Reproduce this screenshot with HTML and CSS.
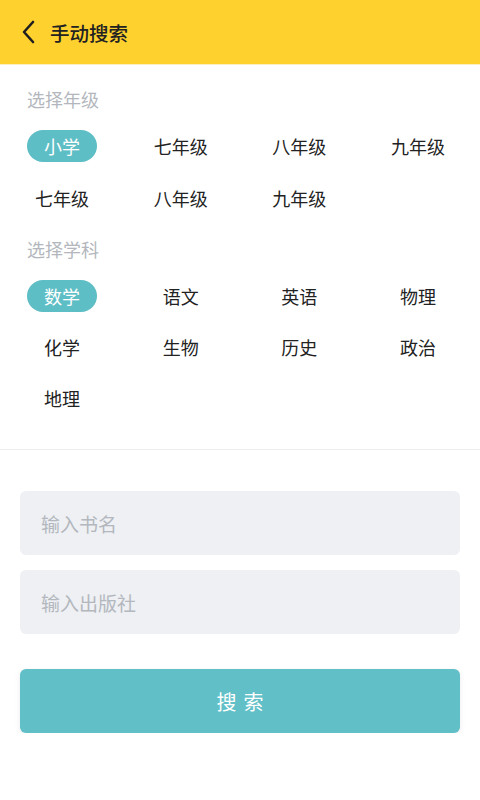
FILE: index.html
```html
<!DOCTYPE html>
<html lang="zh-CN">
<head>
    <meta charset="UTF-8">
    <meta name="viewport" content="width=device-width, initial-scale=1.0">
    <title>手动搜索</title>
    <link rel="stylesheet" href="styles.css">
</head>
<body>
    <header class="top-bar">
        <span class="back">
            <svg width="14" height="24" viewBox="0 0 14 24">
                <path d="M12 2 L3 12 L12 22" fill="none" stroke="#1f1f1f" stroke-width="2.6" stroke-linecap="round" stroke-linejoin="round"/>
            </svg>
        </span>
        <h1>手动搜索</h1>
    </header>

    <section class="filters">
        <div class="filter-label">选择年级</div>
        <div class="options">
            <span class="option active">小学</span>
            <span class="option">七年级</span>
            <span class="option">八年级</span>
            <span class="option">九年级</span>
            <span class="option">七年级</span>
            <span class="option">八年级</span>
            <span class="option">九年级</span>
        </div>

        <div class="filter-label">选择学科</div>
        <div class="options subjects">
            <span class="option active">数学</span>
            <span class="option">语文</span>
            <span class="option">英语</span>
            <span class="option">物理</span>
            <span class="option">化学</span>
            <span class="option">生物</span>
            <span class="option">历史</span>
            <span class="option">政治</span>
            <span class="option">地理</span>
        </div>
    </section>

    <section class="form">
        <input type="text" class="field" placeholder="输入书名">
        <input type="text" class="field" placeholder="输入出版社">
        <button class="search-btn">搜索</button>
    </section>
</body>
</html>
```

FILE: styles.css
```css
* {
    margin: 0;
    padding: 0;
    box-sizing: border-box;
    font-family: "Noto Sans CJK SC", "Noto Sans", sans-serif;
}

body {
    background-color: #fff;
    color: #222;
    width: 480px;
}

.top-bar {
    height: 65px;
    background-color: #ffd12e;
    display: flex;
    align-items: center;
    padding-left: 21px;
    border-bottom: 1px solid #fbeec0;
}

.back {
    display: flex;
    width: 14px;
    margin-right: 15px;
}

.top-bar h1 {
    font-size: 19.5px;
    font-weight: 500;
    color: #222;
}

.filters {
    padding: 23px 27px 35px;
    border-bottom: 1px solid #ededed;
}

.filter-label {
    font-size: 18px;
    line-height: 22px;
    color: #b3b7bd;
    margin-bottom: 20px;
}

.options {
    display: grid;
    grid-template-columns: repeat(4, 70px);
    justify-content: space-between;
    row-gap: 20px;
    margin-bottom: 24px;
}

.options.subjects {
    row-gap: 19px;
    margin-bottom: 0;
}

.option {
    height: 32px;
    line-height: 32px;
    text-align: center;
    font-size: 18px;
    white-space: nowrap;
    color: #222;
}

.option.active {
    background-color: #5ebec5;
    color: #fff;
    border-radius: 16px;
}

.form {
    padding: 41px 20px 0;
    display: flex;
    flex-direction: column;
}

.field {
    height: 64px;
    border: none;
    border-radius: 6px;
    background-color: #eef0f3;
    padding: 0 21px;
    font-size: 19px;
    color: #333;
    margin-bottom: 15px;
    outline: none;
}

.field::placeholder {
    color: #b3b7be;
}

.search-btn {
    margin-top: 20px;
    height: 64px;
    border: none;
    border-radius: 6px;
    background-color: #60bfc7;
    color: #fff;
    font-size: 20px;
    letter-spacing: 7px;
    text-indent: 7px;
    box-shadow: 0 2px 6px rgba(0, 0, 0, 0.08);
}
```
